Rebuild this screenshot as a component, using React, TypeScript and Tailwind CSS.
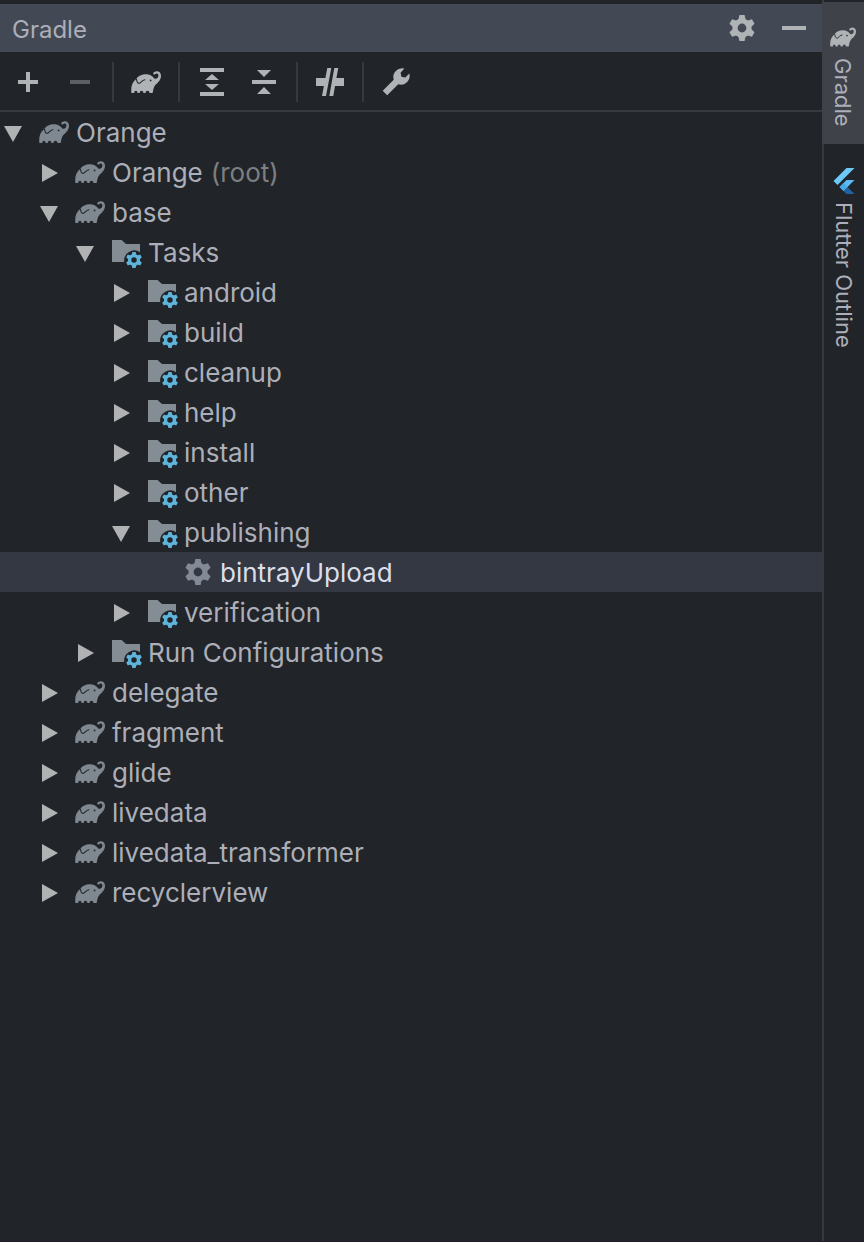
import type React from "react"
import { useState } from "react"
import clsx from "clsx"

type IconKind = "gradle" | "folder" | "task"

interface TreeNode {
  id: string
  label: string
  icon: IconKind
  hint?: string
  children?: TreeNode[]
}

const folder = (label: string, children: TreeNode[] = []): TreeNode => ({ id: label, label, icon: "folder", children })
const project = (label: string, children: TreeNode[] = []): TreeNode => ({ id: label, label, icon: "gradle", children })

const tree: TreeNode[] = [
  project("Orange", [
    { id: "root", label: "Orange", hint: "(root)", icon: "gradle", children: [] },
    project("base", [
      folder("Tasks", [
        folder("android"),
        folder("build"),
        folder("cleanup"),
        folder("help"),
        folder("install"),
        folder("other"),
        folder("publishing", [{ id: "bintrayUpload", label: "bintrayUpload", icon: "task" }]),
        folder("verification"),
      ]),
      folder("Run Configurations"),
    ]),
    project("delegate"),
    project("fragment"),
    project("glide"),
    project("livedata"),
    project("livedata_transformer"),
    project("recyclerview"),
  ]),
]

const Gear = () => (
  <g>
    <circle r="7" fill="none" stroke="currentColor" strokeWidth="5.2" />
    {[0, 60, 120, 180, 240, 300].map((angle) => (
      <path key={angle} d="M-2.6-13h5.2l.9 4.2 1.2 1.8h-9.4l1.2-1.8z" transform={`rotate(${angle})`} fill="currentColor" />
    ))}
  </g>
)

const GearIcon = ({ className }: { className?: string }) => (
  <svg viewBox="-16 -16 32 32" className={clsx("size-8", className)}>
    <Gear />
  </svg>
)

const ElephantIcon = ({ className }: { className?: string }) => (
  <svg viewBox="0 0 30 30" className={className}>
    <g transform="translate(0 3.5)">
      <path
        fill="currentColor"
        d="M.4 22.6C-.3 16.5 1 11.6 5.2 8.4 7.8 4.6 12.6 3.1 17.2 4c2.8.5 4.6 2 6 3.9 1.7 1 4-.1 4.2-2.7.1-1.7-1.3-2.5-2.5-1.9-.7.4-1.3 1-2.1.6-.9-.5-.6-1.7.4-2.4C26-.4 29.9 1 30 5c0 5.4-4 7.5-6 10-1.5 2-1.6 4.2-2.4 7.6h-3.1c-.2-3.2-3.8-3.2-4 0h-2.1c-.2-3.2-3.5-3.2-3.7 0H6.6c-.2-3.2-3.2-3.2-3.4 0z"
      />
      <path
        fill="none"
        stroke="#212428"
        strokeWidth="1.1"
        strokeLinecap="round"
        d="M5.6 8.7c-.1 2.8 1.7 4.8 3.4 3.8 1.7-1 2.3-2.9 4.9-3.3"
      />
      <circle cx="19.6" cy="9.9" r=".9" fill="#212428" />
    </g>
  </svg>
)

const FolderIcon = () => (
  <svg viewBox="0 0 32 32" className="size-8">
    <path d="M2 4h9.6l4.4 4h14v8.2A10.2 10.2 0 0 0 14.2 26H2z" fill="#848c94" />
    <g transform="translate(24 24) scale(.62)" className="text-[#5fb4dc]">
      <Gear />
    </g>
  </svg>
)

const FlutterIcon = () => (
  <svg viewBox="0 0 24 24" className="size-[26px]">
    <path d="M14.3 0 2.3 12 6 15.7 21.7 0z" fill="#6cc8f8" />
    <path d="M14.3 11.1 7.9 17.5l3.7 3.7 10.1-10.1z" fill="#5bbcf5" />
    <path d="m11.6 21.2 3.6-3.7 6.5 6.5h-7.4z" fill="#1f62a5" />
    <path d="m7.9 17.5 3.7-3.7 3.6 3.7-3.6 3.7z" fill="#4aaae8" />
  </svg>
)

const NodeIcon = ({ kind }: { kind: IconKind }) => {
  if (kind === "folder") return <FolderIcon />
  if (kind === "task") return <GearIcon className="text-[#838995]" />
  return <ElephantIcon className="size-[30px] text-[#7f8890]" />
}

interface TreeItemProps {
  node: TreeNode
  level: number
  open: Set<string>
  selected: string
  onPress: (node: TreeNode) => void
}

const TreeItem: React.FC<TreeItemProps> = ({ node, level, open, selected, onPress }) => {
  const isOpen = open.has(node.id)
  const isSelected = selected === node.id
  return (
    <li>
      <button
        type="button"
        onClick={() => onPress(node)}
        aria-expanded={node.children ? isOpen : undefined}
        className={clsx(
          "flex h-10 w-full items-center text-left whitespace-nowrap",
          isSelected ? "bg-[#343843] text-[#dadeea]" : "text-[#acafb9]",
        )}
        style={{ paddingLeft: level * 36 }}
      >
        <span className="flex w-[38px] shrink-0">
          {node.children && (
            <svg viewBox="0 0 28 28" className="size-7 fill-[#b0b2b4]">
              <path d={isOpen ? "M4 8h18l-9 16z" : "M6 6v18l16-9z"} />
            </svg>
          )}
        </span>
        <span className="mr-1.5 flex size-8 shrink-0 items-center justify-center">
          <NodeIcon kind={node.icon} />
        </span>
        <span className="pt-0.5">
          {node.label}
          {node.hint && <span className="ml-2 text-[#7d7f80]">{node.hint}</span>}
        </span>
      </button>
      {isOpen && node.children && (
        <ul>
          {node.children.map((child) => (
            <TreeItem key={child.id} node={child} level={level + 1} open={open} selected={selected} onPress={onPress} />
          ))}
        </ul>
      )}
    </li>
  )
}

const ToolButton = ({ label, disabled, children }: { label: string; disabled?: boolean; children: React.ReactNode }) => (
  <button
    type="button"
    aria-label={label}
    disabled={disabled}
    className="flex size-8 shrink-0 items-center justify-center text-[#b0b3b6] disabled:text-[#5d6063]"
  >
    {children}
  </button>
)

const Glyph = ({ d }: { d: string }) => (
  <svg viewBox="0 0 32 32" className="size-8" fill="currentColor">
    <path d={d} />
  </svg>
)

const Separator = () => <div className="mx-4 h-10 w-0.5 bg-[#36393e]" />

export default function App() {
  const [open, setOpen] = useState(new Set(["Orange", "base", "Tasks", "publishing"]))
  const [selected, setSelected] = useState("bintrayUpload")

  const handlePress = (node: TreeNode) => {
    setSelected(node.id)
    if (!node.children) return
    const next = new Set(open)
    if (next.has(node.id)) next.delete(node.id)
    else next.add(node.id)
    setOpen(next)
  }

  return (
    <div className="flex min-h-screen border-b border-[#211b25] bg-[#212428] font-['Inter',sans-serif] text-[26px] leading-8 text-[#acafb9]">
      <main className="min-w-0 flex-1 pt-1">
        <header className="flex h-12 items-center bg-[#434954] px-3">
          <h1 className="flex-1 pt-1 text-2xl">Gradle</h1>
          <div className="flex gap-5">
            <ToolButton label="Options">
              <GearIcon />
            </ToolButton>
            <ToolButton label="Hide">
              <Glyph d="M4 14h24v4H4z" />
            </ToolButton>
          </div>
        </header>

        <div className="flex h-[60px] items-center border-b-2 border-[#36393e] pt-0.5 pl-3">
          <div className="flex gap-5">
            <ToolButton label="Add">
              <Glyph d="M14 6h4v8h8v4h-8v8h-4v-8H6v-4h8z" />
            </ToolButton>
            <ToolButton label="Remove" disabled>
              <Glyph d="M6 14h20v4H6z" />
            </ToolButton>
          </div>
          <Separator />
          <ToolButton label="Execute Gradle task">
            <ElephantIcon className="size-[30px]" />
          </ToolButton>
          <Separator />
          <div className="flex gap-5">
            <ToolButton label="Expand all">
              <Glyph d="M4 2h24v4H4zM4 26h24v4H4zM16 8l7 6H9zM16 24l7-6H9z" />
            </ToolButton>
            <ToolButton label="Collapse all">
              <Glyph d="M4 14h24v4H4zM16 11l7-7H9zM16 21l7 7H9z" />
            </ToolButton>
          </div>
          <Separator />
          <ToolButton label="Toggle offline mode">
            <Glyph d="M2 12h9.4l1.9-10h4L12 30H8l1.9-10H2zM20.3 2h4l-1.9 10H30v8h-9l-1.7 10h-4z" />
          </ToolButton>
          <Separator />
          <ToolButton label="Build tool settings">
            <Glyph d="M2.7 24.7 13.7 13.7A8.8 8.8 0 0 1 24.4 2.6L20.6 6.8l.8 3.9 3.9.8 4-4A8.8 8.8 0 0 1 18.2 18.3L7.2 29.3z" />
          </ToolButton>
        </div>

        <ul>
          {tree.map((node) => (
            <TreeItem key={node.id} node={node} level={0} open={open} selected={selected} onPress={handlePress} />
          ))}
        </ul>
      </main>

      <nav className="w-[42px] shrink-0 border-l-2 border-[#36393e] pt-0.5 text-[22px] leading-6">
        <button type="button" className="-ml-0.5 flex h-[142px] w-[42px] flex-col items-center bg-[#3f4249] pt-[22px]">
          <ElephantIcon className="size-[26px] text-[#b0b3b6]" />
          <span className="mt-2 [writing-mode:vertical-rl]">Gradle</span>
        </button>
        <button type="button" className="flex w-10 flex-col items-center pt-6">
          <FlutterIcon />
          <span className="mt-2 [writing-mode:vertical-rl]">Flutter Outline</span>
        </button>
      </nav>
    </div>
  )
}
